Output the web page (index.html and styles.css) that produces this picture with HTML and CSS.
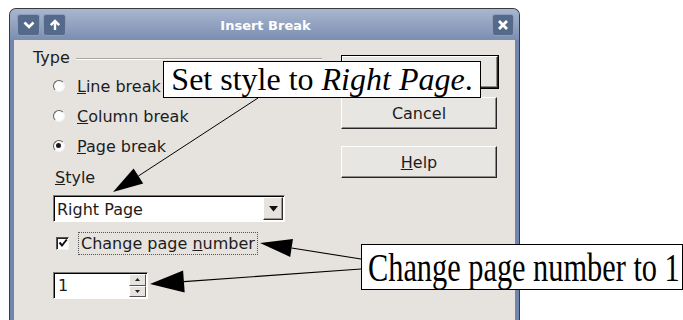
FILE: index.html
```html
<!DOCTYPE html>
<html>
<head>
<meta charset="utf-8">
<link rel="stylesheet" href="styles.css">
</head>
<body>
<div class="stage">
  <div class="window">
    <div class="titlebar">
      <div class="tb-left">
        <span class="tbtn"><svg width="12" height="10" viewBox="0 0 12 10"><path d="M1.5 2.5 L6 7 L10.5 2.5" fill="none" stroke="#fff" stroke-width="2.6" stroke-linejoin="miter"/></svg></span>
        <span class="tbtn"><svg width="12" height="12" viewBox="0 0 12 12"><path d="M6 11 V2.5 M1.8 6.2 L6 2 L10.2 6.2" fill="none" stroke="#fff" stroke-width="2.4"/></svg></span>
      </div>
      <div class="title">Insert Break</div>
      <div class="tb-right">
        <span class="tbtn"><svg width="12" height="12" viewBox="0 0 12 12"><path d="M2 2 L10 10 M10 2 L2 10" fill="none" stroke="#fff" stroke-width="2.8"/></svg></span>
      </div>
    </div>
    <div class="body">
      <div class="left">
        <div class="group-head"><span>Type</span><span class="rule"></span></div>
        <div class="radio-row"><span class="radio"></span><span><u>L</u>ine break</span></div>
        <div class="radio-row"><span class="radio"></span><span><u>C</u>olumn break</span></div>
        <div class="radio-row"><span class="radio on"></span><span><u>P</u>age break</span></div>
        <div class="field-label"><u>S</u>tyle</div>
        <div class="combo">
          <span class="combo-text">Right Page</span>
          <span class="combo-btn"><svg width="9" height="6" viewBox="0 0 9 6"><path d="M0 0 H9 L4.5 5.5 Z" fill="#111"/></svg></span>
        </div>
        <div class="check-row">
          <span class="check"><svg width="10" height="10" viewBox="0 0 10 10"><path d="M1.5 4.5 L4 7.5 L8.8 1.5" fill="none" stroke="#111" stroke-width="2"/></svg></span>
          <span class="focus">Change page <u>n</u>umber</span>
        </div>
        <div class="spin">
          <span class="spin-text">1</span>
          <span class="spin-btns">
            <span class="sbtn"><svg width="5" height="3" viewBox="0 0 5 3"><path d="M0 3 H5 L2.5 0 Z" fill="#222"/></svg></span>
            <span class="sbtn"><svg width="5" height="3" viewBox="0 0 5 3"><path d="M0 0 H5 L2.5 3 Z" fill="#222"/></svg></span>
          </span>
        </div>
      </div>
      <div class="right">
        <div class="default-frame"><div class="btn"></div></div>
        <div class="btn cancel">Cancel</div>
        <div class="btn help"><span><u>H</u>elp</span></div>
      </div>
    </div>
  </div>

  <div class="callout c1">Set style to <i>Right Page</i>.</div>
  <div class="callout c2"><span class="squeeze">Change page number to 1</span></div>

  <svg class="arrows" width="683" height="320" viewBox="0 0 683 320">
    <line x1="258" y1="98" x2="138.4" y2="176" stroke="#000" stroke-width="1"/>
    <polygon points="113,192 143.2,183.6 133.6,168.4" fill="#000"/>
    <line x1="361" y1="259" x2="291.6" y2="248" stroke="#000" stroke-width="1.1"/>
    <polygon points="260,243 293,239.1 290.2,256.9" fill="#000"/>
    <line x1="361" y1="269" x2="183.9" y2="281.6" stroke="#000" stroke-width="1.1"/>
    <polygon points="150,284 184.7,292.6 183.1,270.6" fill="#000"/>
  </svg>
</div>
</body>
</html>
```

FILE: styles.css
```css
* { box-sizing: border-box; }
html, body { margin: 0; padding: 0; background: #fff; }

.stage {
  position: relative;
  width: 683px;
  height: 320px;
  overflow: hidden;
  padding: 8px 0 0 9px;
  background: #fff;
  font-family: "DejaVu Sans", sans-serif;
  font-size: 16px;
  color: #1c1c1c;
}

.window {
  width: 511px;
  height: 330px;
  border: 1px solid #3a3a3a;
  border-bottom: none;
  border-radius: 7px 7px 0 0;
  background: #7086ae;
  display: flex;
  flex-direction: column;
  overflow: hidden;
}

.titlebar {
  height: 31px;
  flex: none;
  display: grid;
  grid-template-columns: 1fr auto 1fr;
  align-items: center;
  padding: 1px 5px 0 7px;
  background: linear-gradient(#a9b7cf, #7b8eb1);
}
.tb-left { display: flex; gap: 3px; }
.tb-right { display: flex; justify-content: flex-end; }
.tbtn {
  width: 23px;
  height: 22px;
  display: flex;
  align-items: center;
  justify-content: center;
  background: #55698b;
  border: 1px solid #8d9dba;
  border-radius: 3px;
}
.tb-right .tbtn { width: 22px; }
.title {
  color: #fff;
  font-weight: bold;
  font-size: 13px;
}

.body {
  flex: 1;
  margin: 0 4px;
  background: #e6e3df;
  display: flex;
}

.left {
  width: 327px;
  flex: none;
  padding: 3px 0 0 19px;
  display: flex;
  flex-direction: column;
  align-items: flex-start;
}

.group-head {
  height: 28px;
  width: 289px;
  display: flex;
  align-items: center;
  gap: 6px;
}
.group-head .rule {
  flex: 1;
  height: 2px;
  border-top: 1px solid #a9a6a2;
  border-bottom: 1px solid #fbfbfa;
  margin-top: 3px;
}

.radio-row {
  height: 30px;
  margin-left: 20px;
  display: flex;
  align-items: center;
  gap: 12px;
}
.radio {
  width: 12px;
  height: 12px;
  border-radius: 50%;
  background: #fdfdfd;
  border: 1.5px solid;
  border-color: #5e5e5e #f4f4f4 #f4f4f4 #5e5e5e;
  position: relative;
}
.radio.on::after {
  content: "";
  position: absolute;
  left: 2px;
  top: 2px;
  width: 5px;
  height: 5px;
  border-radius: 50%;
  background: #1a1a1a;
}

.field-label {
  height: 32px;
  margin-left: 22px;
  display: flex;
  align-items: center;
}

.combo {
  margin-left: 20px;
  margin-top: 2px;
  width: 232px;
  height: 27px;
  background: #fff;
  border: 1px solid;
  border-color: #7b7b7b #fff #fff #7b7b7b;
  box-shadow: inset 1px 1px 0 #000;
  display: flex;
  align-items: center;
  justify-content: space-between;
  padding: 0 1px 0 3px;
}
.combo-text { padding-top: 1px; }
.combo-btn {
  width: 20px;
  height: 23px;
  background: #e6e3df;
  border: 1px solid;
  border-color: #fff #2e2e2e #2e2e2e #fff;
  box-shadow: inset -1px -1px 0 #9a9793;
  display: flex;
  align-items: center;
  justify-content: center;
}

.check-row {
  margin-left: 23px;
  margin-top: 9px;
  height: 24px;
  display: flex;
  align-items: center;
  gap: 9px;
}
.check {
  width: 13px;
  height: 13px;
  background: #fff;
  border: 1px solid;
  border-color: #555 #f2f2f2 #f2f2f2 #555;
  box-shadow: inset 1px 1px 0 #222;
  display: flex;
  align-items: center;
  justify-content: center;
}
.focus {
  border: 1px dotted #555;
  padding: 1px 2px;
  line-height: 19px;
}

.spin {
  margin-left: 20px;
  margin-top: 17px;
  width: 95px;
  height: 27px;
  background: #fff;
  border: 1px solid;
  border-color: #7b7b7b #fff #fff #7b7b7b;
  box-shadow: inset 1px 1px 0 #000;
  display: flex;
  align-items: center;
  justify-content: space-between;
  padding: 1px 1px 1px 4px;
}
.spin-btns {
  width: 17px;
  height: 23px;
  display: flex;
  flex-direction: column;
}
.sbtn {
  flex: 1;
  background: #e6e3df;
  border: 1px solid;
  border-color: #fff #555 #555 #fff;
  display: flex;
  align-items: center;
  justify-content: center;
}

.right {
  padding-top: 15px;
  display: flex;
  flex-direction: column;
  align-items: flex-start;
}
.btn {
  width: 156px;
  height: 32px;
  background: #e8e6e3;
  border: 1px solid;
  border-color: #fff #262626 #262626 #fff;
  box-shadow: inset -1px -1px 0 #8f8c88;
  display: flex;
  align-items: center;
  justify-content: center;
}
.default-frame {
  width: 158px;
  height: 34px;
  border: 1px solid #000;
}
.default-frame .btn { width: 156px; height: 32px; }
.cancel { margin-top: 8px; }
.help { margin-top: 17px; }

.callout {
  position: absolute;
  background: #fff;
  border: 1px solid #000;
  color: #000;
  font-family: "Liberation Serif", "Times New Roman", serif;
  white-space: nowrap;
}
.c1 {
  left: 163px;
  top: 61px;
  width: 318px;
  height: 37px;
  font-size: 32px;
  line-height: 35px;
  text-align: center;
}
.c2 {
  left: 361px;
  top: 244px;
  width: 322px;
  height: 46px;
  font-size: 41px;
  line-height: 44px;
  padding-left: 6px;
}
.squeeze {
  display: inline-block;
  transform: scaleX(0.74);
  transform-origin: left center;
}

.arrows {
  position: absolute;
  left: 0;
  top: 0;
  pointer-events: none;
}
```
